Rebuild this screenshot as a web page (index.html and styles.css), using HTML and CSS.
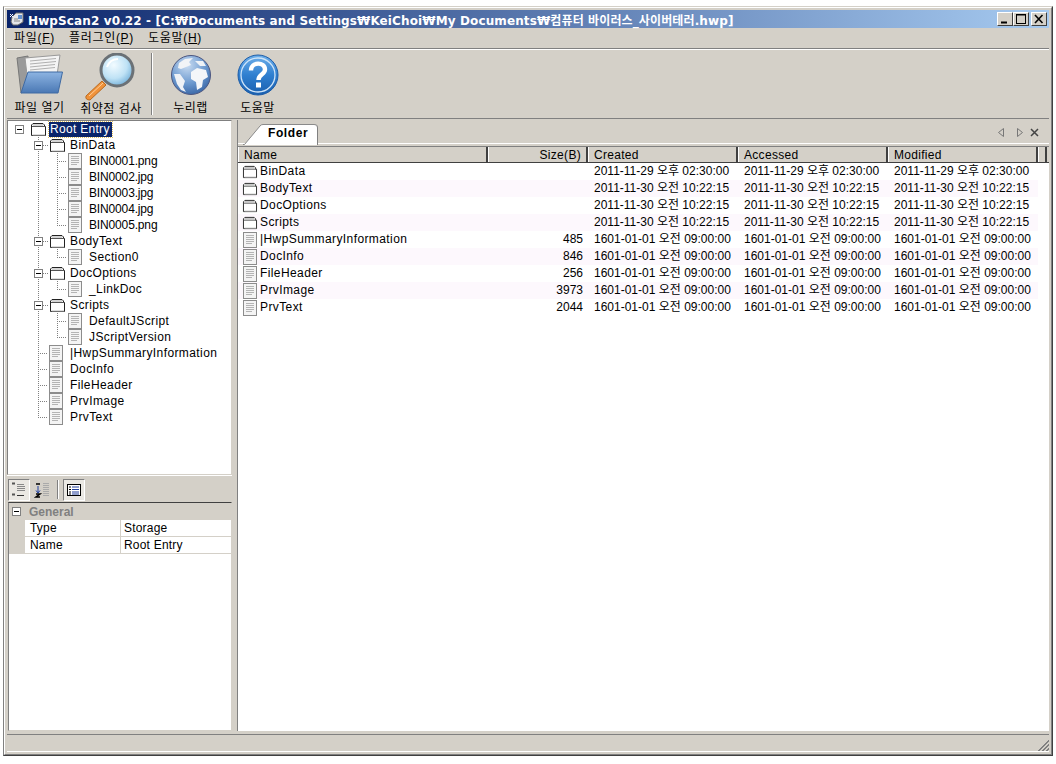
FILE: index.html
```html
<!DOCTYPE html>
<html lang="ko">
<head>
<meta charset="utf-8">
<title>HwpScan2</title>
<link rel="stylesheet" href="styles.css">
</head>
<body>
<svg class="defs" width="0" height="0">
  <defs>
    <symbol id="folder" viewBox="0 0 17 15">
      <path d="M1.5 13.5V3L3 1.5H13L14.5 3V4.5H15.5V13.5Z" fill="#fff" stroke="#222"/>
      <path d="M2 4.5H15" stroke="#555" fill="none"/>
      <path d="M3 3H13" stroke="#aaa" fill="none"/>
      <path d="M2.5 13H15" stroke="#bbb" fill="none"/>
    </symbol>
    <symbol id="doc" viewBox="0 0 14 16">
      <rect x=".5" y=".5" width="13" height="15" fill="#f4f4f4" stroke="#8c8c8c"/>
      <path d="M3 3.5H11M3 5.5H11M3 7.5H11M3 9.5H11M3 11.5H9" stroke="#b4b4b4" fill="none"/>
    </symbol>
    <symbol id="minus" viewBox="0 0 9 9">
      <rect x=".5" y=".5" width="8" height="8" fill="#fff" stroke="#808080"/>
      <path d="M2 4.5H7" stroke="#000"/>
    </symbol>
    <linearGradient id="fblue" x1="0" y1="0" x2="0" y2="1"><stop offset="0" stop-color="#8db4e2"/><stop offset="1" stop-color="#4a78b4"/></linearGradient>
    <radialGradient id="lens" cx=".4" cy=".35" r=".75"><stop offset="0" stop-color="#f2fbff"/><stop offset=".55" stop-color="#bfe2f5"/><stop offset="1" stop-color="#5fa3d2"/></radialGradient>
    <radialGradient id="earth" cx=".4" cy=".25" r=".85"><stop offset="0" stop-color="#c9dcf2"/><stop offset=".55" stop-color="#6c99cf"/><stop offset="1" stop-color="#2f5c9e"/></radialGradient>
    <linearGradient id="qblue" x1="0" y1="0" x2="0" y2="1"><stop offset="0" stop-color="#6fb0ea"/><stop offset=".5" stop-color="#2f7fd0"/><stop offset="1" stop-color="#1a5fae"/></linearGradient>
  </defs>
</svg>
<div class="win">
  <div class="win-inner">
    <div class="titlebar">
      <svg class="app-icon" width="16" height="16" viewBox="0 0 16 16"><path d="M3 6L7 2H14V11L9 14H4L2 11Z" fill="#e4e6ea" stroke="#6a6a6a"/><path d="M9 4H13V8H9Z" fill="#5f8fd0"/><path d="M5 8H9M5 10H11" stroke="#888"/><path d="M1 3L4 6M4 3L1 6" stroke="#fff"/></svg>
      <span class="title-text">HwpScan2 v0.22 - [C:₩Documents and Settings₩KeiChoi₩My Documents₩컴퓨터 바이러스_사이버테러.hwp]</span>
      <span class="caps">
        <span class="cap"><svg width="14" height="12"><path d="M3 9.5H9" stroke="#000" stroke-width="2"/></svg></span>
        <span class="cap"><svg width="14" height="12"><rect x="2.5" y="1.5" width="9" height="9" fill="none" stroke="#000"/><path d="M2 2H12" stroke="#000"/></svg></span>
        <span class="cap cap-x"><svg width="14" height="12"><path d="M3 2L10.5 10M10.5 2L3 10" stroke="#000" stroke-width="1.6"/></svg></span>
      </span>
    </div>
    <div class="menubar">
      <span class="menu">파일(<u>F</u>)</span>
      <span class="menu">플러그인(<u>P</u>)</span>
      <span class="menu">도움말(<u>H</u>)</span>
    </div>
    <div class="toolbar">
      <div class="tool t1">
        <svg width="52" height="46" viewBox="0 0 52 46">
          <path d="M3 5L14 3L15 36L7 40Z" fill="#9a9a9a" stroke="#777"/>
          <path d="M11 5L46 2L43 22L14 30Z" fill="#f4f4f4" stroke="#999"/>
          <path d="M16 8L42 5.500M16 11L42 8.500M16 14L41 11.500M16 17L41 14.500" stroke="#b0b0b0" fill="none"/>
          <path d="M14 19H48.500L44 40H7Z" fill="url(#fblue)" stroke="#3f6aa3"/>
        </svg>
        <span>파일 열기</span>
      </div>
      <div class="tool t2">
        <svg width="54" height="48" viewBox="0 0 54 48">
          <path d="M2 43L18 28L22 32L6 47Q1 47 2 43Z" fill="#f0923a" stroke="#b96a20"/>
          <path d="M5 43L19 30" stroke="#ffd09a" fill="none"/>
          <circle cx="33" cy="17" r="16" fill="url(#lens)" stroke="#6b7176" stroke-width="3"/>
          <path d="M23 14Q26 6 34 6" stroke="#fff" stroke-width="2" fill="none"/>
        </svg>
        <span>취약점 검사</span>
      </div>
      <div class="tool-sep"></div>
      <div class="tool t3">
        <svg width="42" height="42" viewBox="0 0 42 42">
          <circle cx="21" cy="21" r="19.5" fill="url(#earth)" stroke="#4c5680"/>
          <path d="M9 9L15 5L23 4L19 8L21 11L16 13L11 15L8 14Z" fill="#f2f4f7"/>
          <path d="M25 7L33 7L36 12L30 12Z" fill="#eef2f7"/>
          <path d="M21 18L27 14L36 16L38 23L33 26L32 33L27 36L26 28L21 25Z" fill="#f4f6f9"/>
          <path d="M4 20L10 20L15 27L13 33L16 38L11 36L7 30Z" fill="#eef1f6"/>
        </svg>
        <span>누리랩</span>
      </div>
      <div class="tool t4">
        <svg width="42" height="42" viewBox="0 0 42 42">
          <circle cx="21" cy="21" r="20" fill="url(#qblue)" stroke="#1e5da8"/>
          <circle cx="21" cy="21" r="17" fill="none" stroke="#cfe4f8" stroke-width="1.3"/>
          <path d="M14 16.500C14 7.500 28 7.500 28 15.500C28 20.500 21.500 20 21.500 26" fill="none" stroke="#fff" stroke-width="4.400"/>
          <rect x="19" y="28.500" width="5" height="5" fill="#fff"/>
        </svg>
        <span>도움말</span>
      </div>
    </div>
    <div class="main">
      <div class="left">
        <div class="tree">
          <div class="row root"><span class="slot box"><svg width="9" height="9"><use href="#minus"/></svg></span><svg class="ic-f" width="17" height="15"><use href="#folder"/></svg><span class="sel">Root Entry</span></div>
          <div class="row"><span class="slot"></span><span class="slot box branch"><svg width="9" height="9"><use href="#minus"/></svg></span><svg class="ic-f" width="17" height="15"><use href="#folder"/></svg><span class="lbl">BinData</span></div>
          <div class="row"><span class="slot"></span><span class="slot v"></span><span class="slot elbow"></span><svg class="ic-d" width="14" height="16"><use href="#doc"/></svg><span class="lbl tight">BIN0001.png</span></div>
          <div class="row"><span class="slot"></span><span class="slot v"></span><span class="slot elbow"></span><svg class="ic-d" width="14" height="16"><use href="#doc"/></svg><span class="lbl tight">BIN0002.jpg</span></div>
          <div class="row"><span class="slot"></span><span class="slot v"></span><span class="slot elbow"></span><svg class="ic-d" width="14" height="16"><use href="#doc"/></svg><span class="lbl tight">BIN0003.jpg</span></div>
          <div class="row"><span class="slot"></span><span class="slot v"></span><span class="slot elbow"></span><svg class="ic-d" width="14" height="16"><use href="#doc"/></svg><span class="lbl tight">BIN0004.jpg</span></div>
          <div class="row"><span class="slot"></span><span class="slot v"></span><span class="slot elbow last"></span><svg class="ic-d" width="14" height="16"><use href="#doc"/></svg><span class="lbl tight">BIN0005.png</span></div>
          <div class="row"><span class="slot"></span><span class="slot box branch"><svg width="9" height="9"><use href="#minus"/></svg></span><svg class="ic-f" width="17" height="15"><use href="#folder"/></svg><span class="lbl">BodyText</span></div>
          <div class="row"><span class="slot"></span><span class="slot v"></span><span class="slot elbow last"></span><svg class="ic-d" width="14" height="16"><use href="#doc"/></svg><span class="lbl">Section0</span></div>
          <div class="row"><span class="slot"></span><span class="slot box branch"><svg width="9" height="9"><use href="#minus"/></svg></span><svg class="ic-f" width="17" height="15"><use href="#folder"/></svg><span class="lbl">DocOptions</span></div>
          <div class="row"><span class="slot"></span><span class="slot v"></span><span class="slot elbow last"></span><svg class="ic-d" width="14" height="16"><use href="#doc"/></svg><span class="lbl">_LinkDoc</span></div>
          <div class="row"><span class="slot"></span><span class="slot box branch"><svg width="9" height="9"><use href="#minus"/></svg></span><svg class="ic-f" width="17" height="15"><use href="#folder"/></svg><span class="lbl">Scripts</span></div>
          <div class="row"><span class="slot"></span><span class="slot v"></span><span class="slot elbow"></span><svg class="ic-d" width="14" height="16"><use href="#doc"/></svg><span class="lbl">DefaultJScript</span></div>
          <div class="row"><span class="slot"></span><span class="slot v"></span><span class="slot elbow last"></span><svg class="ic-d" width="14" height="16"><use href="#doc"/></svg><span class="lbl">JScriptVersion</span></div>
          <div class="row"><span class="slot"></span><span class="slot elbow"></span><svg class="ic-d" width="14" height="16"><use href="#doc"/></svg><span class="lbl">|HwpSummaryInformation</span></div>
          <div class="row"><span class="slot"></span><span class="slot elbow"></span><svg class="ic-d" width="14" height="16"><use href="#doc"/></svg><span class="lbl">DocInfo</span></div>
          <div class="row"><span class="slot"></span><span class="slot elbow"></span><svg class="ic-d" width="14" height="16"><use href="#doc"/></svg><span class="lbl">FileHeader</span></div>
          <div class="row"><span class="slot"></span><span class="slot elbow"></span><svg class="ic-d" width="14" height="16"><use href="#doc"/></svg><span class="lbl">PrvImage</span></div>
          <div class="row"><span class="slot"></span><span class="slot elbow last"></span><svg class="ic-d" width="14" height="16"><use href="#doc"/></svg><span class="lbl">PrvText</span></div>
        </div>
        <div class="props-bar">
          <span class="pbtn on"><svg width="16" height="16" viewBox="0 0 16 16"><path d="M1 1.500H4M1 12.500H4" stroke="#555" fill="none" stroke-width="2"/><path d="M6 2.500H13M6 4.500H14M6 6.500H14M6 8.500H14" stroke="#888" fill="none"/><path d="M6 13.500H13" stroke="#333" fill="none"/></svg></span>
          <span class="pbtn"><svg width="16" height="18" viewBox="0 0 16 18"><path d="M4 5V12M2 9.500L4 12L6 9.500" stroke="#1f3fa0" fill="none"/><path d="M2 3H6M2 13H6L2 16H6" stroke="#000" fill="none" stroke-width="1.500"/><path d="M9 2.500H15M9 4.500H15M9 6.500H15M9 8.500H15M9 10.500H15M9 12.500H15M9 14.500H15" stroke="#aaa" fill="none"/></svg></span>
          <span class="psep"></span>
          <span class="pbtn on"><svg width="16" height="16" viewBox="0 0 16 16"><rect x="1.500" y="2.500" width="13" height="11" fill="#fff" stroke="#000"/><path d="M3 5H5M3 7.500H5M3 10H5M3 12H5" stroke="#000"/><path d="M6 5H13M6 7.500H13M6 10H13M6 12H13" stroke="#223f9a"/></svg></span>
        </div>
        <div class="props">
          <div class="phead"><svg width="9" height="9"><use href="#minus"/></svg><b>General</b></div>
          <div class="prow"><span class="pk">Type</span><span class="pv">Storage</span></div>
          <div class="prow"><span class="pk">Name</span><span class="pv">Root Entry</span></div>
        </div>
      </div>
      <div class="right">
        <div class="tabs">
          <div class="tab">
            <svg class="tab-slant" width="20" height="21" viewBox="0 0 20 21"><path d="M0 21H1L17 2Q18 .5 20 .5V21Z" fill="#fff"/><path d="M0 20.500H1.500L17 2Q18 .5 20 .5" fill="none" stroke="#8a8a8a"/></svg>
            <span class="tab-label">Folder</span>
          </div>
          <div class="tab-ctl">
            <svg width="8" height="10"><path d="M6.500 .5V8.500L1.500 4.500Z" fill="none" stroke="#777"/></svg>
            <svg width="8" height="10"><path d="M1.500 .5V8.500L6.500 4.500Z" fill="none" stroke="#777"/></svg>
            <svg class="ctl-x" width="10" height="10"><path d="M1 1L8 8M8 1L1 8" stroke="#444" stroke-width="1.500"/></svg>
          </div>
        </div>
        <div class="list">
          <div class="lhead">
            <span class="th first">Name</span><span class="th r">Size(B)</span><span class="th">Created</span><span class="th">Accessed</span><span class="th">Modified</span><span class="th"></span>
          </div>
          <div class="lrow"><span class="nm"><svg width="16" height="14"><use href="#folder"/></svg>BinData</span><span></span><span>2011-11-29 오후 02:30:00</span><span>2011-11-29 오후 02:30:00</span><span>2011-11-29 오후 02:30:00</span></div>
          <div class="lrow"><span class="nm"><svg width="16" height="14"><use href="#folder"/></svg>BodyText</span><span></span><span>2011-11-30 오전 10:22:15</span><span>2011-11-30 오전 10:22:15</span><span>2011-11-30 오전 10:22:15</span></div>
          <div class="lrow"><span class="nm"><svg width="16" height="14"><use href="#folder"/></svg>DocOptions</span><span></span><span>2011-11-30 오전 10:22:15</span><span>2011-11-30 오전 10:22:15</span><span>2011-11-30 오전 10:22:15</span></div>
          <div class="lrow"><span class="nm"><svg width="16" height="14"><use href="#folder"/></svg>Scripts</span><span></span><span>2011-11-30 오전 10:22:15</span><span>2011-11-30 오전 10:22:15</span><span>2011-11-30 오전 10:22:15</span></div>
          <div class="lrow"><span class="nm"><svg width="16" height="16"><use href="#doc"/></svg>|HwpSummaryInformation</span><span class="r">485</span><span>1601-01-01 오전 09:00:00</span><span>1601-01-01 오전 09:00:00</span><span>1601-01-01 오전 09:00:00</span></div>
          <div class="lrow"><span class="nm"><svg width="16" height="16"><use href="#doc"/></svg>DocInfo</span><span class="r">846</span><span>1601-01-01 오전 09:00:00</span><span>1601-01-01 오전 09:00:00</span><span>1601-01-01 오전 09:00:00</span></div>
          <div class="lrow"><span class="nm"><svg width="16" height="16"><use href="#doc"/></svg>FileHeader</span><span class="r">256</span><span>1601-01-01 오전 09:00:00</span><span>1601-01-01 오전 09:00:00</span><span>1601-01-01 오전 09:00:00</span></div>
          <div class="lrow"><span class="nm"><svg width="16" height="16"><use href="#doc"/></svg>PrvImage</span><span class="r">3973</span><span>1601-01-01 오전 09:00:00</span><span>1601-01-01 오전 09:00:00</span><span>1601-01-01 오전 09:00:00</span></div>
          <div class="lrow"><span class="nm"><svg width="16" height="16"><use href="#doc"/></svg>PrvText</span><span class="r">2044</span><span>1601-01-01 오전 09:00:00</span><span>1601-01-01 오전 09:00:00</span><span>1601-01-01 오전 09:00:00</span></div>
        </div>
      </div>
    </div>
    <div class="status">
      <svg class="grip" width="12" height="12" viewBox="0 0 12 12"><path d="M1 12L12 1M2 12L12 2M5 12L12 5M6 12L12 6M9 12L12 9M10 12L12 10" stroke="#808080" fill="none"/></svg>
    </div>
  </div>
</div>
</body>
</html>
```
FILE: styles.css
```css
* { box-sizing: border-box; }
html, body { margin: 0; padding: 0; background: #fff; }
body { font-family: "Liberation Sans", "Noto Sans CJK KR", sans-serif; font-size: 12px; color: #000; }
.defs { display: block; height: 0; }

.win { margin: 6px 0 0 3px; width: 1050px; height: 750px; background: #d4d0c8; border: 1px solid; border-color: #d4d0c8 #404040 #404040 #808080; }
.win-inner { height: 100%; border: 1px solid; border-color: #fff #808080 #808080 #fff; padding: 2px; display: flex; flex-direction: column; }

.titlebar { height: 18px; flex: none; display: flex; align-items: center; padding: 0 2px; background: linear-gradient(90deg, #0a246a, #a6caf0); color: #fff; }
.app-icon { flex: none; margin-right: 3px; }
.title-text { font: bold 12px "DejaVu Sans", "Noto Sans CJK KR", sans-serif; white-space: nowrap; letter-spacing: .12px; }
.caps { margin-left: auto; display: flex; }
.cap { width: 16px; height: 14px; background: #d4d0c8; border: 1px solid; border-color: #fff #404040 #404040 #fff; display: flex; align-items: center; justify-content: center; }
.cap svg { display: block; }
.cap-x { margin-left: 2px; }

.menubar { height: 20px; flex: none; display: flex; align-items: center; padding-left: 7px; gap: 14px; }
.menu { line-height: 20px; letter-spacing: .7px; }

.toolbar { height: 71px; flex: none; border-top: 1px solid #808080; border-bottom: 1px solid #808080; box-shadow: inset 0 1px 0 #fff; display: flex; align-items: stretch; }
.tool { display: flex; flex-direction: column; align-items: center; padding: 4px 0 1px; }
.tool svg { display: block; flex: none; }
.tool span { margin-top: auto; line-height: 17px; white-space: nowrap; letter-spacing: .5px; }
.t1 { width: 65px; }
.t2 { width: 78px; }
.t3, .t4 { width: 67px; padding-top: 5px; }
.tool-sep { width: 2px; margin: 4px 4px 3px 1px; background: #808080; border-right: 1px solid #fff; }

.main { flex: 1; min-height: 0; display: flex; padding-top: 1px; gap: 5px; }
.left { width: 225px; flex: none; display: flex; flex-direction: column; }
.tree { height: 355px; flex: none; background: #fff; border: 1px solid; border-color: #808080 #d4d0c8 #d4d0c8 #808080; }
.row { height: 16px; display: flex; align-items: center; padding-left: 2px; white-space: nowrap; }
.slot { width: 19px; height: 16px; flex: none; }
.row.root { padding-left: 1px; }
.slot.box { display: flex; align-items: center; justify-content: center; }
.slot.box svg { display: block; }
.row.root .slot.box { width: 20px; }
.v { background: repeating-linear-gradient(180deg, #808080 0 1px, transparent 1px 2px) 9px 0 / 1px 100% no-repeat; }
.branch { background: repeating-linear-gradient(180deg, #808080 0 1px, transparent 1px 2px) 9px 0 / 1px 100% no-repeat, repeating-linear-gradient(90deg, #808080 0 1px, transparent 1px 2px) 14px 8px / 5px 1px no-repeat; }
.elbow { background: repeating-linear-gradient(180deg, #808080 0 1px, transparent 1px 2px) 9px 0 / 1px 100% no-repeat, repeating-linear-gradient(90deg, #808080 0 1px, transparent 1px 2px) 9px 8px / 10px 1px no-repeat; }
.elbow.last { background: repeating-linear-gradient(180deg, #808080 0 1px, transparent 1px 2px) 9px 0 / 1px 9px no-repeat, repeating-linear-gradient(90deg, #808080 0 1px, transparent 1px 2px) 9px 8px / 10px 1px no-repeat; }
.ic-f, .ic-d { flex: none; margin-left: 1px; display: block; }
.lbl { margin-left: 7px; letter-spacing: .4px; }
.lbl.tight { letter-spacing: -.15px; }
.ic-f + .lbl { margin-left: 4px; }
.sel { margin-left: 2px; padding: 0 2px 0 1px; background: #0a246a; color: #fff; outline: 1px dotted #e0c060; line-height: 15px; letter-spacing: .3px; }

.props-bar { height: 27px; flex: none; padding: 3px 0 0 1px; display: flex; align-items: flex-start; gap: 1px; border-top: 1px solid #fff; }
.pbtn { width: 22px; height: 22px; display: flex; align-items: center; justify-content: center; }
.pbtn.on { background: #eae8e3; border: 1px solid; border-color: #808080 #fff #fff #808080; }
.psep { width: 2px; height: 19px; margin: 1px 3px; background: #808080; border-right: 1px solid #fff; }
.props { flex: 1; margin: 0 0 0 1px; background: #fff; border: 1px solid; border-color: #404040 #d4d0c8 #d4d0c8 #808080; min-height: 0; }
.phead { height: 17px; background: #d4d0c8; display: flex; align-items: center; padding-left: 3px; }
.phead svg { flex: none; }
.phead b { margin-left: 8px; color: #808080; font-size: 12px; }
.prow { height: 17px; display: grid; grid-template-columns: 16px 96px 1fr; border-bottom: 1px solid #d4d0c8; line-height: 16px; background: linear-gradient(90deg, #d4d0c8 16px, transparent 16px); }
.pk { grid-column: 2; padding-left: 5px; border-right: 1px solid #d4d0c8; letter-spacing: .2px; }
.pv { grid-column: 3; padding-left: 3px; letter-spacing: .2px; }

.right { flex: 1; min-width: 0; display: flex; flex-direction: column; border-left: 1px solid #808080; }
.tabs { height: 26px; flex: none; display: flex; align-items: flex-start; padding: 4px 0 0 5px; box-shadow: inset 0 -2px 0 #d4d0c8, inset 0 -3px 0 #fff; }
.tab { display: flex; height: 21px; }
.tab-slant { display: block; flex: none; }
.tab-label { width: 55px; height: 21px; background: #fff; border-right: 1px solid #808080; border-top: 1px solid #8a8a8a; border-radius: 0 4px 0 0; font-weight: bold; letter-spacing: .6px; line-height: 17px; padding-left: 5px; }
.tab-ctl { margin-left: auto; display: flex; align-items: center; gap: 11px; padding: 4px 9px 0 0; }
.tab-ctl svg { display: block; }
.tab-ctl .ctl-x { margin-left: -5px; }
.list { flex: 1; background: #fff; border-top: 1px solid #808080; min-height: 0; }
.lhead { display: grid; grid-template-columns: 250px 100px 150px 150px 150px 9px; height: 16px; border-bottom: 1px solid #404040; background: #d4d0c8; }
.th { border-right: 2px solid #404040; border-left: 1px solid #fff; padding-left: 5px; line-height: 17px; letter-spacing: .3px; overflow: hidden; }
.th.r { text-align: right; padding-right: 5px; }
.lrow { display: grid; grid-template-columns: 250px 100px 150px 150px 150px; height: 17px; line-height: 17px; width: 800px; white-space: nowrap; }
.lrow:nth-child(odd) { background: #fdf8fd; }
.lrow > span { padding-left: 6px; }
.lrow > span.nm { padding-left: 4px; display: flex; align-items: center; gap: 2px; letter-spacing: .4px; }
.lrow > span.nm svg { flex: none; }
.lrow > span.r { text-align: right; padding-right: 5px; padding-left: 0; }

.status { height: 18px; flex: none; margin-top: 3px; border-top: 1px solid #808080; border-bottom: 1px solid #fff; display: flex; justify-content: flex-end; align-items: flex-end; }
.grip { display: block; }
```
